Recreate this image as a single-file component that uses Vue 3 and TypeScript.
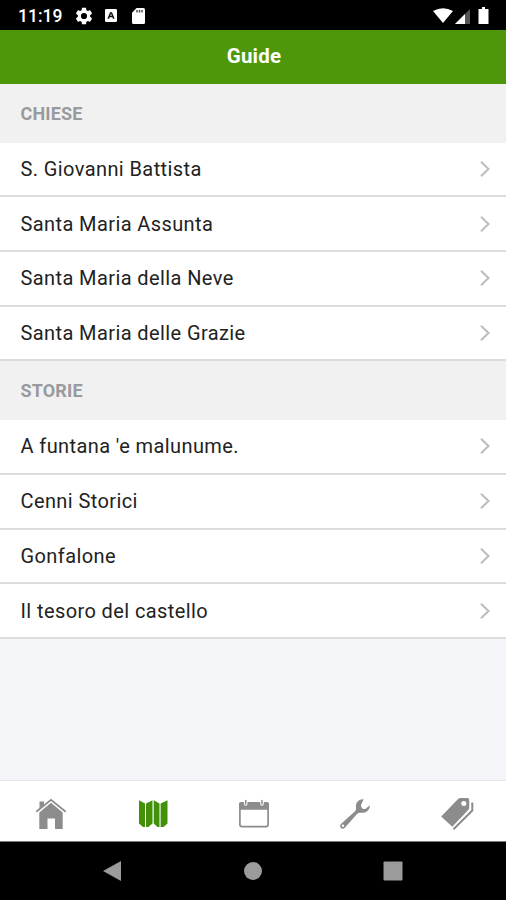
<script setup lang="ts">
interface Section {
  title: string
  items: string[]
}

const sections: Section[] = [
  {
    title: 'CHIESE',
    items: ['S. Giovanni Battista', 'Santa Maria Assunta', 'Santa Maria della Neve', 'Santa Maria delle Grazie'],
  },
  {
    title: 'STORIE',
    items: ["A funtana 'e malunume.", 'Cenni Storici', 'Gonfalone', 'Il tesoro del castello'],
  },
]
</script>

<template>
  <div class="screen">
    <div class="status">
      <span class="clock">11:19</span>
      <svg class="gear" width="18" height="18" viewBox="1.500 1.500 21 21" fill="#fff">
        <path d="M19.14 12.94c.04-.3.06-.61.06-.94s-.02-.64-.07-.94l2.03-1.58c.18-.14.23-.41.12-.61l-1.92-3.32c-.12-.22-.37-.29-.59-.22l-2.39.96c-.5-.38-1.03-.7-1.62-.94l-.36-2.54c-.04-.24-.24-.41-.48-.41h-3.84c-.24 0-.43.17-.47.41l-.36 2.54c-.59.24-1.13.57-1.62.94l-2.39-.96c-.22-.08-.47 0-.59.22L2.74 8.87c-.12.21-.08.47.12.61l2.03 1.58c-.05.3-.09.63-.09.94s.02.64.07.94l-2.03 1.58c-.18.14-.23.41-.12.61l1.92 3.32c.12.22.37.29.59.22l2.39-.96c.5.38 1.03.7 1.62.94l.36 2.54c.05.24.24.41.48.41h3.84c.24 0 .44-.17.47-.41l.36-2.54c.59-.24 1.13-.56 1.62-.94l2.39.96c.22.08.47 0 .59-.22l1.92-3.32c.12-.22.07-.47-.12-.61zM12 15.6a3.6 3.6 0 1 1 0-7.2 3.6 3.6 0 0 1 0 7.2z" />
      </svg>
      <svg class="badge" width="12" height="13" viewBox="0 0 12 13">
        <rect width="12" height="13" rx="1.2" fill="#fff" />
        <path d="M2.4 9.8 5 3.2h2l2.6 6.600H7.9L7.4 8.300H4.600l-.5 1.500zM5.2 6.700h1.600L6 4.600z" fill="#111" />
      </svg>
      <svg class="card" width="13" height="16" viewBox="0 0 13 16">
        <path d="M4.600 0h6.900Q13 0 13 1.500v13Q13 16 11.500 16h-10Q0 16 0 14.500V4.800z" fill="#fff" />
        <path d="M5 2v2.500M7.500 2v2.500M10 2v2.500" stroke="#444" stroke-width="1.400" />
      </svg>
      <span class="spacer"></span>
      <svg class="signals" width="56" height="18" viewBox="0 0 56 18">
        <path d="M0 4Q10 -1.500 20 4L10 16z" fill="#fff" />
        <path d="M37 2V17H22z" fill="#555" />
        <path d="M32 7V17H22z" fill="#fff" />
        <path d="M49 0h3v2H55.500V17H45.500V2H49z" fill="#fff" />
      </svg>
    </div>

    <header class="header">Guide</header>

    <main class="content">
      <section v-for="section in sections" :key="section.title">
        <h2 class="section-title">{{ section.title }}</h2>
        <ul class="list">
          <li v-for="item in section.items" :key="item" class="row">
            <span>{{ item }}</span>
            <svg class="chevron" width="12" height="18" viewBox="0 0 12 18">
              <path d="M2 1.800 9.500 9 2 16.200" />
            </svg>
          </li>
        </ul>
      </section>
    </main>

    <nav class="tabs">
      <span class="tab">
        <svg width="32" height="32" viewBox="0 0 32 32" fill="#8c8c8c">
          <path d="M4.500 3.500h4.500v3l-4.500 4z" />
          <path d="m1.300 13.800 14.700-12 14.700 12" fill="none" stroke="#8c8c8c" stroke-width="1.800" />
          <path d="M16 4.800 27.700 14.600V31H20V20.500h-7.500V31H4.300V14.600z" />
        </svg>
      </span>
      <span class="tab">
        <svg width="30" height="30" viewBox="0 0 30 30">
          <path d="M1 1.300 7 4.600V28H5L1 24.500zM14.500 1.300V24.500L10.300 28H8V4.600zM15.700 1.300 21.500 4.600V28H19.500L15.700 24.500zM29.500 1.300V24.500L25.500 28H22.600V4.600z" fill="#43900b" />
        </svg>
      </span>
      <span class="tab">
        <svg width="32" height="30" viewBox="0 0 32 30">
          <rect x="1.900" y="4" width="28.200" height="23.600" rx="2" fill="#fff" stroke="#8c8c8c" stroke-width="1.700" />
          <path d="M1 10.800V5Q1 3 3 3h26q2 0 2 2v5.800z" fill="#8c8c8c" />
          <path d="M7.700 1.500v3.500M24 1.500v3.500" stroke="#fff" stroke-width="3.600" stroke-linecap="round" />
          <path d="M7.700 1.500v3.500M24 1.500v3.500" stroke="#8c8c8c" stroke-width="1.500" stroke-linecap="round" />
        </svg>
      </span>
      <span class="tab">
        <svg width="32" height="32" viewBox="0 0 32 32">
          <path d="M24.700 1.300C20 .8 16.300 4.600 17 9.700q.3 2.300-1.200 3.900L1.900 26c-2.400 2.700.9 6.300 3.700 3.900L18 16q1.400-1.600 3.700-1.300c5.300.8 9.400-3 9.100-7.500L27 10.600q-2 1.200-3.800-.4t-.9-4z" fill="#8c8c8c" />
          <circle cx="4" cy="27.800" r="1.200" fill="#fff" />
        </svg>
      </span>
      <span class="tab">
        <svg width="34" height="34" viewBox="0 0 34 34">
          <path d="M1.200 19.500 17.800 2.200Q19 1 20.500 1h7q1.700 0 1.700 1.700v8.100q0 1.200-1 2.200L12.300 29.800z" fill="#8c8c8c" />
          <circle cx="23.800" cy="6.500" r="2.500" fill="#fff" />
          <path d="M32.300 5.500v8L13.500 32.300" fill="none" stroke="#8c8c8c" stroke-width="2" />
        </svg>
      </span>
    </nav>

    <div class="system">
      <svg width="20" height="22" viewBox="0 0 20 22"><path d="M1 11 19 1v20z" fill="#9b9b9b" /></svg>
      <svg width="20" height="20" viewBox="0 0 20 20"><circle cx="10" cy="10" r="9" fill="#9b9b9b" /></svg>
      <svg width="20" height="20" viewBox="0 0 20 20"><rect x=".5" y=".5" width="19" height="19" rx="1" fill="#9b9b9b" /></svg>
    </div>
  </div>
</template>

<style>
body {
  margin: 0;
}
</style>

<style scoped>
.screen {
  display: flex;
  flex-direction: column;
  width: 506px;
  height: 900px;
  overflow: hidden;
  background: #f4f5f9;
  font-family: Roboto, "Liberation Sans", sans-serif;
}

.status {
  display: flex;
  align-items: center;
  flex: none;
  height: 30px;
  box-sizing: border-box;
  padding: 1px 16px 0 18px;
  background: #000;
  color: #fff;
}

.clock {
  width: 57px;
  font-size: 17.5px;
  font-weight: 500;
}

.badge {
  margin-left: 12px;
}

.card {
  margin-left: 15px;
}

.spacer {
  flex: 1;
}

.signals {
  margin-right: 1px;
}

.header {
  flex: none;
  height: 54px;
  background: #4f970a;
  color: #fff;
  font-size: 20.5px;
  font-weight: 700;
  letter-spacing: 0.2px;
  line-height: 53px;
  text-align: center;
  padding-left: 2px;
}

.content {
  flex: 1;
  min-height: 0;
}

.section-title {
  margin: 0;
  padding-left: 20.5px;
  height: 58.7px;
  background: #f1f1f1;
  color: #999a9e;
  font-size: 18px;
  font-weight: 700;
  letter-spacing: 0.15px;
  line-height: 59px;
}

.list {
  margin: 0;
  padding: 0;
  list-style: none;
}

.row {
  display: flex;
  align-items: center;
  justify-content: space-between;
  box-sizing: border-box;
  height: 54.7px;
  padding: 0 15px 0 20.5px;
  border-bottom: 2px solid #dcdcdc;
  background: #fff;
  color: #222;
  font-size: 20px;
  letter-spacing: 0.4px;
}

.chevron {
  fill: none;
  stroke: #bdbdbd;
  stroke-width: 2;
}

.tabs {
  display: grid;
  grid-template-columns: repeat(5, 1fr);
  flex: none;
  box-sizing: border-box;
  height: 62px;
  padding-top: 6px;
  border-top: 1px solid #e4e5e9;
  border-bottom: 1px solid #777;
  background: #fff;
}

.tab {
  display: flex;
  align-items: center;
  justify-content: center;
}

.tab:nth-child(n + 2) {
  padding-left: 2px;
}

.tab:last-child {
  padding-left: 3px;
}

.system {
  display: flex;
  align-items: center;
  justify-content: space-between;
  flex: none;
  box-sizing: border-box;
  height: 58px;
  padding: 0 103px 0 102px;
  background: #000;
}
</style>
